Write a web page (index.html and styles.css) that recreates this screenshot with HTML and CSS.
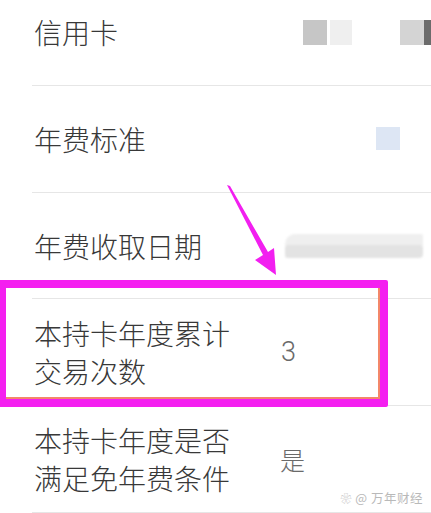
FILE: index.html
```html
<!DOCTYPE html>
<html lang="zh">
<head>
<meta charset="utf-8">
<link rel="stylesheet" href="styles.css">
</head>
<body>
<div class="page">
  <div class="list">
    <div class="row">
      <div class="label">信用卡</div>
      <div class="value">
        <div class="blur-group">
          <span class="blk b1"></span><span class="blk b2"></span>
        </div>
        <div class="blur-group right">
          <span class="blk b3"></span><span class="blk b4"></span>
        </div>
      </div>
    </div>
    <div class="row">
      <div class="label">年费标准</div>
      <div class="value"><span class="blk blue"></span></div>
    </div>
    <div class="row">
      <div class="label">年费收取日期</div>
      <div class="value"><span class="blk bar"><span class="bar-in"></span></span></div>
    </div>
    <div class="row">
      <div class="label">本持卡年度累计交易次数</div>
      <div class="value num digit">3</div>
    </div>
    <div class="row">
      <div class="label">本持卡年度是否满足免年费条件</div>
      <div class="value num">是</div>
    </div>
  </div>

  <div class="highlight"></div>
  <svg class="arrow" width="431" height="513" viewBox="0 0 431 513">
    <polygon points="227,185 230,186 268,252 274,248 276,275 255,260 263,255" fill="#f21ff0"/>
  </svg>
  <div class="watermark"><span class="wm-icon">❀</span> @ 万年财经</div>
</div>
</body>
</html>
```

FILE: styles.css
```css
html, body {
  margin: 0;
  padding: 0;
  background: #ffffff;
}
body {
  font-family: "Noto Sans CJK SC", "Noto Sans", sans-serif;
  color: #2e2e2e;
  overflow: hidden;
}
.page {
  position: relative;
  width: 431px;
  height: 513px;
  overflow: hidden;
}
.list {
  margin-top: -20.7px;
}
.row {
  height: 106.7px;
  box-sizing: border-box;
  margin-left: 32px;
  border-bottom: 1px solid #e6e6e6;
  display: flex;
  align-items: center;
}
.label {
  flex: 0 0 248px;
  box-sizing: border-box;
  padding-left: 2px;
  padding-right: 42px;
  font-size: 28px;
  font-weight: 300;
  line-height: 38px;
  color: #383838;
}
.value {
  flex: 1;
  display: flex;
  align-items: center;
  font-size: 25px;
  font-weight: 300;
  color: #6a6a6a;
}
.digit {
  font-family: "Roboto", "Noto Sans", sans-serif;
  font-size: 27px;
  padding-left: 1px;
}
.blur-group {
  display: flex;
  margin-left: 23px;
}
.blur-group.right {
  margin-left: 48px;
}
.blk {
  display: inline-block;
  height: 25px;
}
.b1 { width: 24px; background: #c6c6c6; filter: blur(0.6px); }
.b2 { width: 22px; background: #efefef; margin-left: 3px; filter: blur(0.6px); }
.b3 { width: 24px; background: #d4d4d4; }
.b4 { width: 8px; background: #6b6b6b; }
.blue {
  width: 24px;
  height: 23px;
  margin-left: 96px;
  background: #dde6f4;
  filter: blur(0.5px);
}
.bar {
  width: 138px;
  height: 24px;
  margin-left: 5px;
  background: #efefef;
  border-radius: 10px 2px 12px 2px;
  filter: blur(1px);
  display: flex;
  align-items: flex-end;
}
.bar-in {
  display: block;
  width: 100%;
  height: 13px;
  background: #e3e3e3;
  border-radius: 4px;
}
.highlight {
  position: absolute;
  left: -2px;
  top: 280px;
  width: 390px;
  height: 127px;
  box-sizing: border-box;
  border: 8px solid #f41ff0;
  box-shadow: inset -1px -1px 0 1px #f3876a;
  border-radius: 2px;
}
.arrow {
  position: absolute;
  left: 0;
  top: 0;
}
.watermark {
  position: absolute;
  right: 8px;
  top: 490px;
  font-size: 12.5px;
  line-height: 16px;
  color: #b9b9b9;
  letter-spacing: 0.5px;
}
.wm-icon {
  font-size: 11px;
}
```
